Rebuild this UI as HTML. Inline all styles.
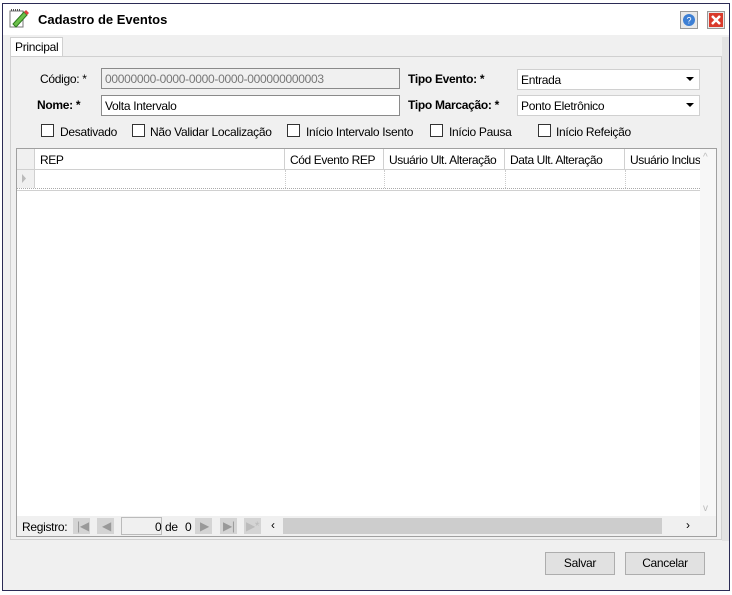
<!DOCTYPE html>
<html><head><meta charset="utf-8"><style>
*{box-sizing:border-box;margin:0;padding:0}
body{width:732px;height:595px;background:#fff;font-family:"Liberation Sans",Arial,sans-serif;font-size:12px;color:#000;position:relative;overflow:hidden}
.a{position:absolute}
.win{left:2px;top:3px;width:728px;height:588px;border:1px solid #2b2b55;background:#f0f0f0}
.title{left:3px;top:4px;width:726px;height:31px;background:#fff}
.lbl{position:absolute;white-space:nowrap;letter-spacing:-0.3px}
.in{position:absolute;height:21px;border:1px solid #8a8a8a;background:#fff;padding:3px 3px;white-space:nowrap;letter-spacing:-0.3px}
.cb{position:absolute;width:13px;height:13px;border:1px solid #333;background:#fff}
.btn{position:absolute;height:23px;border:1px solid #adadad;background:#e1e1e1;text-align:center;line-height:21px;letter-spacing:-0.3px}
.hd{position:absolute;top:0;height:21px;border-right:1px solid #d0d0d0;padding:4px 5px;white-space:nowrap;letter-spacing:-0.4px;overflow:hidden}
.nb{position:absolute;top:518px;width:17px;height:16px;background:#d4d4d4}
</style></head><body>
<div class="a win"></div>
<div class="a title"></div>
<svg class="a" style="left:8px;top:7px" width="22" height="22" viewBox="0 0 22 22">
<rect x="2" y="4" width="13" height="16" fill="#fff" stroke="#777"/>
<path d="M3 3h10" stroke="#555" stroke-width="2" stroke-dasharray="1 1"/>
<path d="M5 17l11-12 3 3-11 12z" fill="#6cc04a" stroke="#2d7a1e"/>
<path d="M16 5l2-2 3 3-2 2z" fill="#e04040"/>
</svg>
<div class="lbl" style="left:38px;top:12px;font-weight:bold;font-size:13px;letter-spacing:0">Cadastro de Eventos</div>
<svg class="a" style="left:680px;top:11px" width="18" height="18"><rect x="0.5" y="0.5" width="17" height="17" fill="#e8e8e8" stroke="#999"/><circle cx="9" cy="9" r="6" fill="#3d7fd4"/><text x="9" y="12.5" font-size="9" fill="#fff" text-anchor="middle" font-family="Liberation Sans">?</text></svg>
<svg class="a" style="left:707px;top:11px" width="18" height="18"><rect x="0.5" y="0.5" width="17" height="17" fill="#e8e8e8" stroke="#999"/><rect x="2" y="2" width="14" height="14" fill="#d93a2b"/><path d="M5 5l8 8M13 5l-8 8" stroke="#fff" stroke-width="2.5"/></svg>

<div class="a" style="left:10px;top:37px;width:53px;height:20px;background:#fff;border:1px solid #d0d0d0;border-bottom:none"></div>
<div class="lbl" style="left:15px;top:40px">Principal</div>
<div class="a" style="left:10px;top:56px;width:712px;height:484px;background:#fff;border:1px solid #d0d0d0"></div>
<div class="a" style="left:722px;top:37px;width:7px;height:504px;background:#e3e3e3"></div>
<div class="a" style="left:11px;top:57px;width:710px;height:482px;background:#f0f0f0"></div>

<div class="lbl" style="left:40px;top:72px">Código: *</div>
<div class="in" style="left:101px;top:68px;width:299px;background:#f0f0f0;color:#777">00000000-0000-0000-0000-000000000003</div>
<div class="lbl" style="left:37px;top:98px;font-weight:bold">Nome: *</div>
<div class="in" style="left:101px;top:95px;width:299px">Volta Intervalo</div>
<div class="lbl" style="left:408px;top:72px;font-weight:bold">Tipo Evento: *</div>
<div class="in" style="left:517px;top:69px;width:183px;border-color:#d0d0d0">Entrada</div>
<div class="lbl" style="left:408px;top:98px;font-weight:bold">Tipo Marcação: *</div>
<div class="in" style="left:517px;top:95px;width:183px;border-color:#d0d0d0">Ponto Eletrônico</div>
<svg class="a" style="left:686px;top:77px" width="8" height="5"><path d="M0 0h8l-4 4z"/></svg>
<svg class="a" style="left:686px;top:103px" width="8" height="5"><path d="M0 0h8l-4 4z"/></svg>

<div class="cb" style="left:41px;top:124px"></div><div class="lbl" style="left:60px;top:125px">Desativado</div>
<div class="cb" style="left:132px;top:124px"></div><div class="lbl" style="left:150px;top:125px">Não Validar Localização</div>
<div class="cb" style="left:287px;top:124px"></div><div class="lbl" style="left:306px;top:125px">Início Intervalo Isento</div>
<div class="cb" style="left:430px;top:124px"></div><div class="lbl" style="left:449px;top:125px">Início Pausa</div>
<div class="cb" style="left:538px;top:124px"></div><div class="lbl" style="left:556px;top:125px">Início Refeição</div>

<div class="a" style="left:16px;top:148px;width:701px;height:389px;background:#fff;border:1px solid #a0a0a0"></div>
<div class="a" style="left:17px;top:149px;width:683px;height:21px;background:#fff;border-bottom:1px solid #d0d0d0;overflow:hidden">
<div class="hd" style="left:0;width:18px;background:#f0f0f0"></div>
<div class="hd" style="left:18px;width:250px">REP</div>
<div class="hd" style="left:268px;width:99px">Cód Evento REP</div>
<div class="hd" style="left:367px;width:121px">Usuário Ult. Alteração</div>
<div class="hd" style="left:488px;width:120px">Data Ult. Alteração</div>
<div class="hd" style="left:608px;width:75px;border:none">Usuário Inclusão</div>
</div>
<div class="a" style="left:17px;top:170px;width:18px;height:18px;background:#f0f0f0;border-right:1px solid #d0d0d0"></div>
<svg class="a" style="left:22px;top:174px" width="5" height="9"><path d="M0 0l4 4.5-4 4.5z" fill="#bbb"/></svg>
<div class="a" style="left:285px;top:170px;height:18px;border-left:1px dotted #ccc"></div>
<div class="a" style="left:384px;top:170px;height:18px;border-left:1px dotted #ccc"></div>
<div class="a" style="left:505px;top:170px;height:18px;border-left:1px dotted #ccc"></div>
<div class="a" style="left:625px;top:170px;height:18px;border-left:1px dotted #ccc"></div>
<div class="a" style="left:17px;top:188px;width:683px;border-top:1px dotted #aaa"></div>
<div class="a" style="left:17px;top:190px;width:683px;border-top:1px solid #d0d0d0"></div>
<div class="a" style="left:700px;top:149px;width:16px;height:367px;background:#f7f7f7"></div>
<div class="lbl" style="left:703px;top:152px;color:#bbb;font-size:10px">^</div>
<div class="lbl" style="left:703px;top:503px;color:#bbb;font-size:10px">v</div>

<div class="a" style="left:17px;top:516px;width:699px;height:20px;background:#f0f0f0"></div>
<div class="lbl" style="left:22px;top:520px">Registro:</div>
<div class="nb" style="left:73px"></div><div class="nb" style="left:97px"></div>
<div class="lbl" style="left:77px;top:519px;color:#999">|◀</div><div class="lbl" style="left:102px;top:519px;color:#999">◀</div>
<div class="a" style="left:121px;top:517px;width:41px;height:18px;background:#f0f0f0;border:1px solid #bbb"></div>
<div class="lbl" style="left:155px;top:520px">0</div>
<div class="lbl" style="left:165px;top:520px">de</div>
<div class="lbl" style="left:185px;top:520px">0</div>
<div class="nb" style="left:195px"></div><div class="nb" style="left:220px"></div><div class="nb" style="left:244px"></div>
<div class="lbl" style="left:200px;top:519px;color:#999">▶</div><div class="lbl" style="left:223px;top:519px;color:#999">▶|</div><div class="lbl" style="left:246px;top:519px;color:#bbb">▶*</div>
<div class="lbl" style="left:271px;top:518px">‹</div>
<div class="a" style="left:283px;top:518px;width:379px;height:16px;background:#cdcdcd"></div>
<div class="lbl" style="left:686px;top:518px">›</div>

<div class="btn" style="left:545px;top:552px;width:70px">Salvar</div>
<div class="btn" style="left:625px;top:552px;width:80px">Cancelar</div>
</body></html>
